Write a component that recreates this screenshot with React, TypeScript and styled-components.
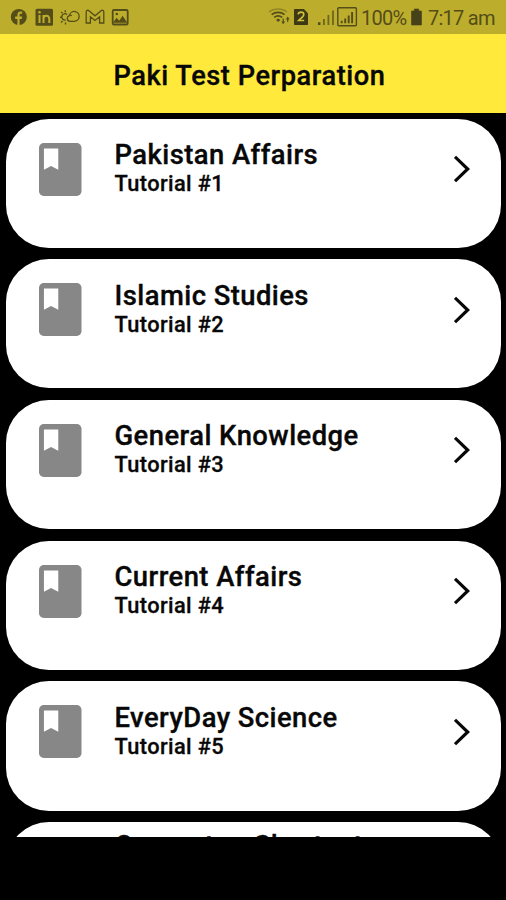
import React from 'react';
import styled, { createGlobalStyle } from 'styled-components';

const GlobalStyle = createGlobalStyle`
  * { box-sizing: border-box; }
  body { margin: 0; background: #000; font-family: Roboto, sans-serif; color: #080808; }
`;

const Screen = styled.div`
  width: 506px;
  height: 900px;
  background: #000;
  overflow: hidden;
`;

const StatusBar = styled.div`
  height: 34px;
  background: #bcae2c;
  color: #544d19;
  display: flex;
  align-items: center;
  justify-content: space-between;
  padding: 0 11px 0 10px;
`;

const StatusGroup = styled.div`
  display: flex;
  align-items: center;
`;

const StatusText = styled.span<{ $width: number }>`
  width: ${(p) => p.$width}px;
  font-size: 20px;
  line-height: 24px;
  padding-top: 2px;
  white-space: nowrap;
  letter-spacing: -0.75px;
`;

const Header = styled.header`
  height: 79px;
  background: #ffe93b;
  display: flex;
  align-items: center;
  padding: 4px 0 0 113.5px;
`;

const HeaderTitle = styled.h1`
  margin: 0;
  font-size: 27.2px;
  font-weight: 500;
  line-height: 32px;
  letter-spacing: 0.55px;
  white-space: nowrap;
  -webkit-text-stroke: 0.35px currentColor;
`;

const List = styled.main`
  height: 724px;
  overflow: hidden;
  display: flex;
  flex-direction: column;
  gap: 11.4px;
  padding: 5.5px 5px 0 6px;
`;

const Card = styled.article`
  flex: none;
  height: 129.3px;
  border-radius: 43px;
  background: #fff;
  display: flex;
  align-items: flex-start;
  padding: 20px 30px 0 33px;
`;

const BookIcon = styled.svg`
  width: 42.5px;
  height: 53px;
  margin-top: 4px;
  flex: none;
`;

const Labels = styled.div<{ $raised: boolean }>`
  flex: 1;
  margin: ${(p) => (p.$raised ? '-12px' : '0.6px')} 0 0 33px;
`;

const CardTitle = styled.h2`
  margin: 0;
  font-size: 27.4px;
  line-height: 32px;
  font-weight: 500;
  letter-spacing: 0.45px;
  white-space: pre;
  -webkit-text-stroke: 0.35px currentColor;
`;

const Subtitle = styled.p`
  margin: 0;
  font-size: 21.8px;
  line-height: 25px;
  font-weight: 500;
  letter-spacing: 0.38px;
  -webkit-text-stroke: 0.3px currentColor;
`;

const Chevron = styled.svg`
  width: 17px;
  height: 28px;
  margin-top: 16.4px;
  flex: none;
`;

const subjects = [
  { name: 'Pakistan Affairs' },
  { name: 'Islamic Studies' },
  { name: 'General Knowledge' },
  { name: 'Current Affairs' },
  { name: 'EveryDay Science' },
  { name: 'Computer  Shortcut', raised: true },
];

const NotificationIcons = () => (
  <svg width="122" height="20" viewBox="0 0 122 20" fill="none" stroke="#544d19">
    <circle cx="8.8" cy="10" r="8" fill="#544d19" stroke="none" />
    <path d="M7.4 18v-6H5.2V9.5h2.2V8c0-2.4 1.3-3.5 3.3-3.5h1.5v2.3h-1.3c-1 0-1.3.5-1.3 1.3v1.4h2.6l-.5 2.5H9.6v6z" fill="#bcae2c" stroke="none" />
    <rect x="25.5" y="1.7" width="17.5" height="17" rx="1.5" fill="#544d19" stroke="none" />
    <path d="M29.5 8v8M33.5 16V8m0 4c0-4 5.8-4.5 5.8 0v4" stroke="#bcae2c" strokeWidth="2" />
    <circle cx="29.5" cy="5.2" r="1.3" fill="#bcae2c" stroke="none" />
    <path d="M59 14.3h5.2a4.9 4.9 0 1 0-4.7-6.2M61.8 8.6c-2.2-.7-4.5.5-4.5 2.9a2.8 2.8 0 0 0 2.8 2.8M55.6 13a3.2 3.2 0 1 1 1.6-5.4" strokeWidth="1.3" />
    <path d="M55.3 3.2v2M51.2 5l1.3 1.3M50 10.3h2M51.1 15.4l1.3-1.4M55.5 15.6v2" strokeWidth="1.4" />
    <path d="M76.2 16V4.8c0-1.5 1.7-2 2.8-1l6 5 6-5c1.1-1 2.8-.5 2.8 1V16h-4.2V9.8L85 13.5l-4.6-3.7V16z" strokeWidth="1.3" />
    <rect x="102.7" y="3" width="15" height="14.5" rx="1.3" strokeWidth="1.8" />
    <path d="m103 15.8 3.6-5 2.6 3 3.4-5 4.7 7z" fill="#544d19" stroke="none" />
    <circle cx="106.8" cy="7" r="1.3" fill="#544d19" stroke="none" />
  </svg>
);

const SignalIcons = () => (
  <svg width="94" height="22" viewBox="0 0 94 22" fill="none" stroke="#544d19">
    <path d="M2 6c5-4 13-4 18 0" strokeWidth="1.4" opacity=".4" />
    <path d="M4.6 8.6c3.9-3 9.3-3 13 0M7.2 11.4c2.4-2 5.5-2 8 0" strokeWidth="1.7" />
    <path d="m9 14 2.2-1.5 2.2 1.5-2.2 2z" fill="#544d19" stroke="none" />
    <path d="M16.2 12.5v4.7M20.7 16v-4.2" strokeWidth="1.2" />
    <path d="m14.3 15.5 1.9 2.8 1.9-2.8zM18.8 13.5l1.9-2.9 1.9 2.9z" fill="#544d19" stroke="none" />
    <path d="M27.5 3.5h9.5l3.5 4V18.5h-13z" fill="#3e3814" stroke="#3e3814" strokeLinejoin="round" />
    <path d="M31.2 8.4c.2-3.1 5.6-3.1 5.6.1 0 2.2-3.2 3.9-5.2 6h5.6" stroke="#d0c13b" strokeWidth="1.6" />
    <path d="M52.2 16.2v2.8" strokeWidth="2.5" />
    <path d="M56.9 13v6M61.4 9v10M66 4.5v14.5" strokeWidth="1.8" opacity=".75" />
    <rect x="70.8" y="1.8" width="18.6" height="18" rx="1" strokeWidth="1.4" />
    <path d="M74.7 14.8v2.4M78.2 12.5v4.7M81.7 9.5v7.7M85.1 6v11.2" strokeWidth="1.9" />
  </svg>
);

const Battery = styled.svg`
  width: 13px;
  height: 18px;
  margin-right: 5px;
  flex: none;
`;

export default function App() {
  return (
    <>
      <GlobalStyle />
      <Screen>
        <StatusBar>
          <StatusGroup><NotificationIcons /></StatusGroup>
          <StatusGroup>
            <SignalIcons />
            <StatusText $width={49}>100%</StatusText>
            <Battery viewBox="0 0 13 18">
              <path d="M1.5 3h2.8V1h4.4v2h2.8v14h-10z" fill="#47411a" stroke="#47411a" strokeWidth=".6" strokeLinejoin="round" />
            </Battery>
            <StatusText $width={67}>7:17 am</StatusText>
          </StatusGroup>
        </StatusBar>
        <Header><HeaderTitle>Paki Test Perparation</HeaderTitle></Header>
        <List>
          {subjects.map((subject, index) => (
            <Card key={subject.name}>
              <BookIcon viewBox="0 0 43 53" preserveAspectRatio="none">
                <rect width="43" height="53" rx="4.8" fill="#878787" />
                <path d="M5 5.5h14.5v21.3L12.2 23 5 26.8z" fill="#fff" />
              </BookIcon>
              <Labels $raised={!!subject.raised}>
                <CardTitle>{subject.name}</CardTitle>
                <Subtitle>Tutorial #{index + 1}</Subtitle>
              </Labels>
              <Chevron viewBox="0 0 17 28" fill="none">
                <path d="m1 1.8 12.7 12.2L1 26.2" stroke="#080808" strokeWidth="3.2" />
              </Chevron>
            </Card>
          ))}
        </List>
      </Screen>
    </>
  );
}
